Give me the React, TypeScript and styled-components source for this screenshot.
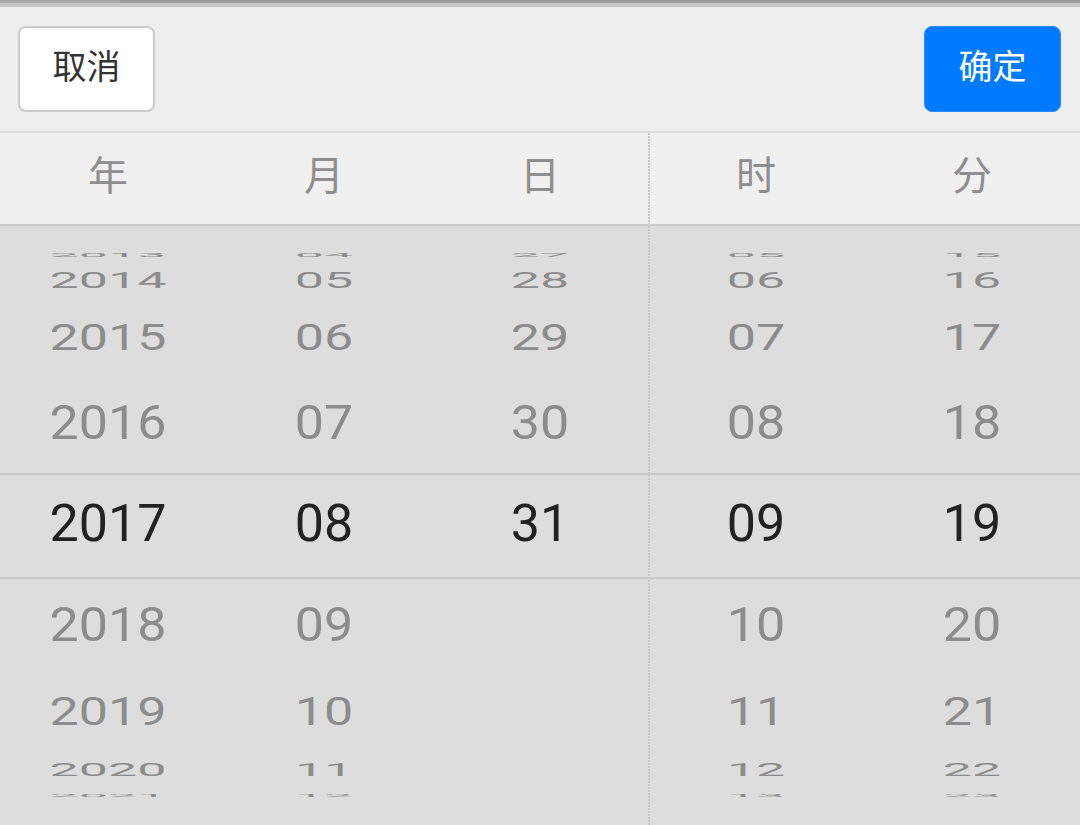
import React from "react";
import styled, { createGlobalStyle } from "styled-components";

const Global = createGlobalStyle`
  html, body { margin: 0; padding: 0; background: #dddddd; }
  body { font-family: Roboto, "Noto Sans CJK SC", sans-serif; }
  * { box-sizing: border-box; }
`;

const Page = styled.div`
  width: 1080px;
  height: 825px;
  overflow: hidden;
  display: flex;
  flex-direction: column;
  background: #dddddd;
`;

const TopStrip = styled.div`
  height: 7px;
  flex-shrink: 0;
  background: #c6c6c6;
  display: flex;
  flex-direction: column;
`;

const TopBar = styled.div`
  height: 3px;
  background: linear-gradient(to right, #aaaaaa 0 120px, #9b9b9b 120px);
`;

const Header = styled.div`
  flex-shrink: 0;
  display: flex;
  justify-content: space-between;
  align-items: center;
  padding: 19px 19px 19px 18px;
  background: #eeeeee;
  border-bottom: 2px solid #dcdcdc;
`;

const Button = styled.button<{ $primary?: boolean }>`
  width: 137px;
  height: 86px;
  padding: 0 0 8px;
  border-radius: 8px;
  display: flex;
  align-items: center;
  justify-content: center;
  font-family: "Noto Sans CJK SC", sans-serif;
  font-size: 34px;
  line-height: 1;
  cursor: pointer;
  background: ${(p) => (p.$primary ? "#007aff" : "#ffffff")};
  color: ${(p) => (p.$primary ? "#ffffff" : "#333333")};
  border: ${(p) => (p.$primary ? "1px solid #2a8cff" : "2px solid #cccccc")};
`;

const Grid = styled.div`
  display: grid;
  grid-template-columns: repeat(5, 216px);
`;

const LabelRow = styled(Grid)`
  flex-shrink: 0;
  height: 93px;
  background: #f0f0f0;
  border-bottom: 2px solid #cccccc;
`;

const dotted = `
  background-image: repeating-linear-gradient(to bottom, #c9c9c9 0 2px, transparent 2px 3px);
  background-size: 2px 100%;
  background-repeat: no-repeat;
  background-position: 0 0;
`;

const LabelCell = styled.div<{ $divider?: boolean }>`
  display: flex;
  align-items: center;
  justify-content: center;
  padding-bottom: 11px;
  font-family: "Noto Sans CJK SC", sans-serif;
  font-size: 40px;
  line-height: 1;
  color: #8e8e8e;
  ${(p) => (p.$divider ? dotted : "")}
`;

const Wheels = styled(Grid)`
  flex: 1;
`;

const WheelCol = styled.div<{ $divider?: boolean }>`
  display: flex;
  flex-direction: column;
  padding-top: 26px;
  ${(p) => (p.$divider ? dotted : "")}
`;

const Slot = styled.div<{ $h: number }>`
  height: ${(p) => p.$h}px;
  flex-shrink: 0;
  display: flex;
  align-items: center;
  justify-content: center;
`;

const Num = styled.span<{ $s: number }>`
  display: inline-block;
  font-family: Roboto, sans-serif;
  font-size: 52px;
  line-height: 1;
  color: #8c8c8c;
  transform: scaleY(${(p) => p.$s});
  white-space: nowrap;
`;

const SelectedSlot = styled.div`
  height: 106px;
  flex-shrink: 0;
  border-top: 2px solid #c8c8c8;
  border-bottom: 2px solid #c8c8c8;
  padding-bottom: 4px;
  display: flex;
  align-items: center;
  justify-content: center;
`;

const SelectedNum = styled.span`
  font-family: Roboto, sans-serif;
  font-size: 52px;
  line-height: 1;
  color: #222222;
`;

const range = (a: number, b: number, pad = 2) =>
  Array.from({ length: b - a + 1 }, (_, i) => String(a + i).padStart(pad, "0"));

const columns = [
  { label: "年", items: range(2013, 2021, 4) },
  { label: "月", items: range(4, 12) },
  { label: "日", items: range(27, 31) },
  { label: "时", items: range(5, 13), divider: true },
  { label: "分", items: range(15, 23) },
];

const SELECTED = 4;
// slot heights & vertical scales for positions -4..-1 and +1..+4
const above = [
  { h: 6, s: 0.09 },
  { h: 45, s: 0.42 },
  { h: 70, s: 0.71 },
  { h: 100, s: 0.92 },
];
const below = [
  { h: 92, s: 0.92 },
  { h: 82, s: 0.76 },
  { h: 34, s: 0.37 },
  { h: 17, s: 0.08 },
];

export default function App() {
  return (
    <Page>
      <Global />
      <TopStrip>
        <TopBar />
      </TopStrip>
      <Header>
        <Button>取消</Button>
        <Button $primary>确定</Button>
      </Header>
      <LabelRow>
        {columns.map((c) => (
          <LabelCell key={c.label} $divider={c.divider}>
            {c.label}
          </LabelCell>
        ))}
      </LabelRow>
      <Wheels>
        {columns.map((c) => (
          <WheelCol key={c.label} $divider={c.divider}>
            {c.items.map((v, i) => {
              if (i === SELECTED)
                return (
                  <SelectedSlot key={v}>
                    <SelectedNum>{v}</SelectedNum>
                  </SelectedSlot>
                );
              const cfg = i < SELECTED ? above[i] : below[i - SELECTED - 1];
              return (
                <Slot key={v} $h={cfg.h}>
                  <Num $s={cfg.s}>{v}</Num>
                </Slot>
              );
            })}
          </WheelCol>
        ))}
      </Wheels>
    </Page>
  );
}
